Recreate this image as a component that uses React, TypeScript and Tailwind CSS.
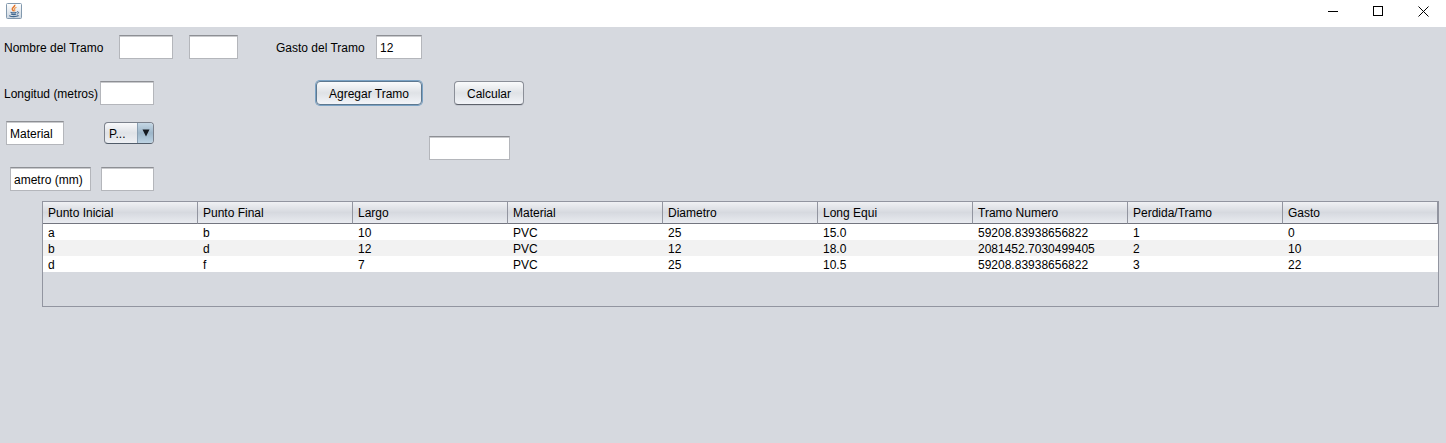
import React, { useState } from 'react';
import clsx from 'clsx';

const COLUMNS = [
  'Punto Inicial',
  'Punto Final',
  'Largo',
  'Material',
  'Diametro',
  'Long Equi',
  'Tramo Numero',
  'Perdida/Tramo',
  'Gasto',
];

const ROWS = [
  ['a', 'b', '10', 'PVC', '25', '15.0', '59208.83938656822', '1', '0'],
  ['b', 'd', '12', 'PVC', '12', '18.0', '2081452.7030499405', '2', '10'],
  ['d', 'f', '7', 'PVC', '25', '10.5', '59208.83938656822', '3', '22'],
];

interface FieldProps {
  label: string;
  id?: string;
  value?: string;
  className: string;
}

const Field: React.FC<FieldProps> = ({ label, id, value = '', className }) => {
  const [text, setText] = useState(value);

  return (
    <input
      id={id}
      type="text"
      aria-label={id ? undefined : label}
      value={text}
      onChange={(e) => setText(e.target.value)}
      className={clsx(
        'h-6 shrink-0 border border-[#b4b6bb] border-t-[#8d8f94] bg-white px-[3px] pt-[2px] shadow-[inset_0_1px_0_#c9cacd] outline-none',
        className,
      )}
    />
  );
};

interface PushButtonProps {
  children: React.ReactNode;
  focused?: boolean;
  className: string;
}

const PushButton: React.FC<PushButtonProps> = ({ children, focused, className }) => (
  <button
    type="button"
    className={clsx(
      'h-6 shrink-0 rounded-[4px] border bg-linear-to-b from-[#fafbfc] via-[#dfe2e6] to-[#f2f4f8] pt-[2px] text-center',
      focused
        ? 'border-[#5d7890] shadow-[0_0_0_1px_#7ba3c5]'
        : 'border-[#8b8f98] border-b-[#5e626b] shadow-[0_1px_0_#c4c8d0]',
      className,
    )}
  >
    {children}
  </button>
);

const JavaIcon: React.FC = () => (
  <svg width="16" height="16" viewBox="0 0 16 16" fill="none" aria-hidden="true">
    <defs>
      <linearGradient id="cup-bg" x1="0" y1="0" x2="0" y2="1">
        <stop offset="0" stopColor="#ffffff" />
        <stop offset="1" stopColor="#ccd6e0" />
      </linearGradient>
    </defs>
    <rect x="0.5" y="0.5" width="15" height="15" rx="1" fill="url(#cup-bg)" stroke="#8299ae" />
    <path d="M8.7 1.8C9.6 3.7 5.8 4.4 6.3 6.2C6.5 7 7.4 7.6 7.5 8.3" stroke="#e5762b" strokeWidth="1.5" />
    <path d="M10.5 4.2C8.6 4.9 8.1 5.8 8.7 6.8C9 7.4 8.8 7.9 8.3 8.3" stroke="#ef9a50" strokeWidth="1.2" />
    <path d="M4.5 9.2C6 9.8 9 9.8 10.5 9.2M5 11C6.5 11.6 8.8 11.6 10.2 11" stroke="#42688f" strokeWidth="1.2" />
    <path d="M11 8.8C13.3 8.4 13 10.6 10.9 11.1" stroke="#42688f" />
    <path d="M3.2 12.6C5 14 10.5 14 12.6 12.6" stroke="#42688f" strokeWidth="1.2" />
  </svg>
);

const TitleBar: React.FC = () => (
  <header className="flex h-[27px] items-start justify-between bg-white">
    <div className="pt-[3px] pl-[6px]">
      <JavaIcon />
    </div>
    <div className="flex">
      <button type="button" aria-label="Minimizar" className="flex h-[22px] w-[45px] items-center justify-center">
        <svg width="11" height="11" viewBox="0 0 11 11" stroke="#000" shapeRendering="crispEdges">
          <path d="M1 5.5H11" />
        </svg>
      </button>
      <button type="button" aria-label="Maximizar" className="flex h-[22px] w-[46px] items-center justify-center">
        <svg width="11" height="11" viewBox="0 0 11 11" fill="none" stroke="#000" shapeRendering="crispEdges">
          <rect x="0.5" y="0.5" width="9" height="9" />
        </svg>
      </button>
      <button type="button" aria-label="Cerrar" className="flex h-[22px] w-[45px] items-center justify-center">
        <svg width="11" height="11" viewBox="0 0 11 11" stroke="#000">
          <path d="M0.5 0.5L10.5 10.5M10.5 0.5L0.5 10.5" />
        </svg>
      </button>
    </div>
  </header>
);

const MaterialSelect: React.FC = () => (
  <div className="relative h-[22px] w-[50px] shrink-0 overflow-hidden rounded-[4px] border border-[#7b818c] border-b-[#515c69] bg-linear-to-b from-[#f8f9fb] via-[#dfe2e7] to-[#eef0f4]">
    <select aria-label="Material" className="h-full w-full appearance-none bg-transparent pt-px pl-1 outline-none">
      <option>P...</option>
    </select>
    <span className="pointer-events-none absolute inset-y-0 right-0 flex w-4 items-center justify-center border-l border-[#8a9fb2] bg-linear-to-b from-[#c5d7e5] via-[#9db6c9] to-[#bdd3e3]">
      <svg width="8" height="8" viewBox="0 0 8 8" aria-hidden="true">
        <path d="M0.5 0.5H7.5L4 7.5Z" fill="#151a20" />
      </svg>
    </span>
  </div>
);

const TramosTable: React.FC = () => (
  <div className="mt-[10px] mr-[7px] ml-[42px] min-h-[106px] border border-[#9295a0]">
    <table className="w-full table-fixed border-separate border-spacing-0 text-left">
      <thead>
        <tr className="h-[22px]">
          {COLUMNS.map((name) => (
            <th
              key={name}
              className="border-r border-b border-r-[#9295a0] border-b-[#73757f] bg-linear-to-b from-[#f0f1f4] via-[#d6d9df] to-[#e9ebf0] p-0 pl-[5px] font-normal"
            >
              {name}
            </th>
          ))}
        </tr>
      </thead>
      <tbody>
        {ROWS.map((row, i) => (
          <tr key={i} className="h-4 bg-white even:bg-[#f2f2f2]">
            {row.map((cell, j) => (
              <td key={j} className="p-0 pt-[2px] pl-[5px] leading-[14px]">
                {cell}
              </td>
            ))}
          </tr>
        ))}
      </tbody>
    </table>
  </div>
);

export default function App() {
  return (
    <div className="min-h-screen bg-[#d6d9df] font-['Liberation_Sans',Arial,sans-serif] text-[12px] leading-4 text-black">
      <TitleBar />
      <main className="pt-2">
        <div className="flex items-center">
          <label htmlFor="nombre" className="w-[119px] shrink-0 pt-[2px] pl-1 whitespace-nowrap">
            Nombre del Tramo
          </label>
          <Field id="nombre" label="Nombre del Tramo" className="w-[54px]" />
          <Field label="Punto final" className="ml-4 w-[49px]" />
          <label htmlFor="gasto" className="ml-[38px] w-[100px] shrink-0 pt-[2px] whitespace-nowrap">
            Gasto del Tramo
          </label>
          <Field id="gasto" label="Gasto del Tramo" value="12" className="w-[46px]" />
        </div>

        <div className="mt-[22px] flex items-center">
          <label htmlFor="longitud" className="w-[100px] shrink-0 overflow-hidden pt-[2px] pl-1 whitespace-nowrap">
            Longitud (metros)
          </label>
          <Field id="longitud" label="Longitud" className="w-[54px]" />
          <PushButton focused className="ml-[162px] w-[106px]">
            Agregar Tramo
          </PushButton>
          <PushButton className="ml-8 w-[70px]">Calcular</PushButton>
        </div>

        <div className="mt-4 flex items-start">
          <div className="flex w-[429px] shrink-0 flex-col gap-[22px]">
            <div className="flex items-center pl-[6px]">
              <Field label="Etiqueta material" value="Material" className="mr-10 w-[58px]" />
              <MaterialSelect />
            </div>
            <div className="flex items-center gap-[10px] pl-[10px]">
              <Field label="Etiqueta diametro" value="ametro (mm)" className="w-[81px]" />
              <Field label="Diametro" className="w-[53px]" />
            </div>
          </div>
          <Field label="Resultado" className="mt-[15px] w-[81px]" />
        </div>

        <TramosTable />
      </main>
    </div>
  );
}
